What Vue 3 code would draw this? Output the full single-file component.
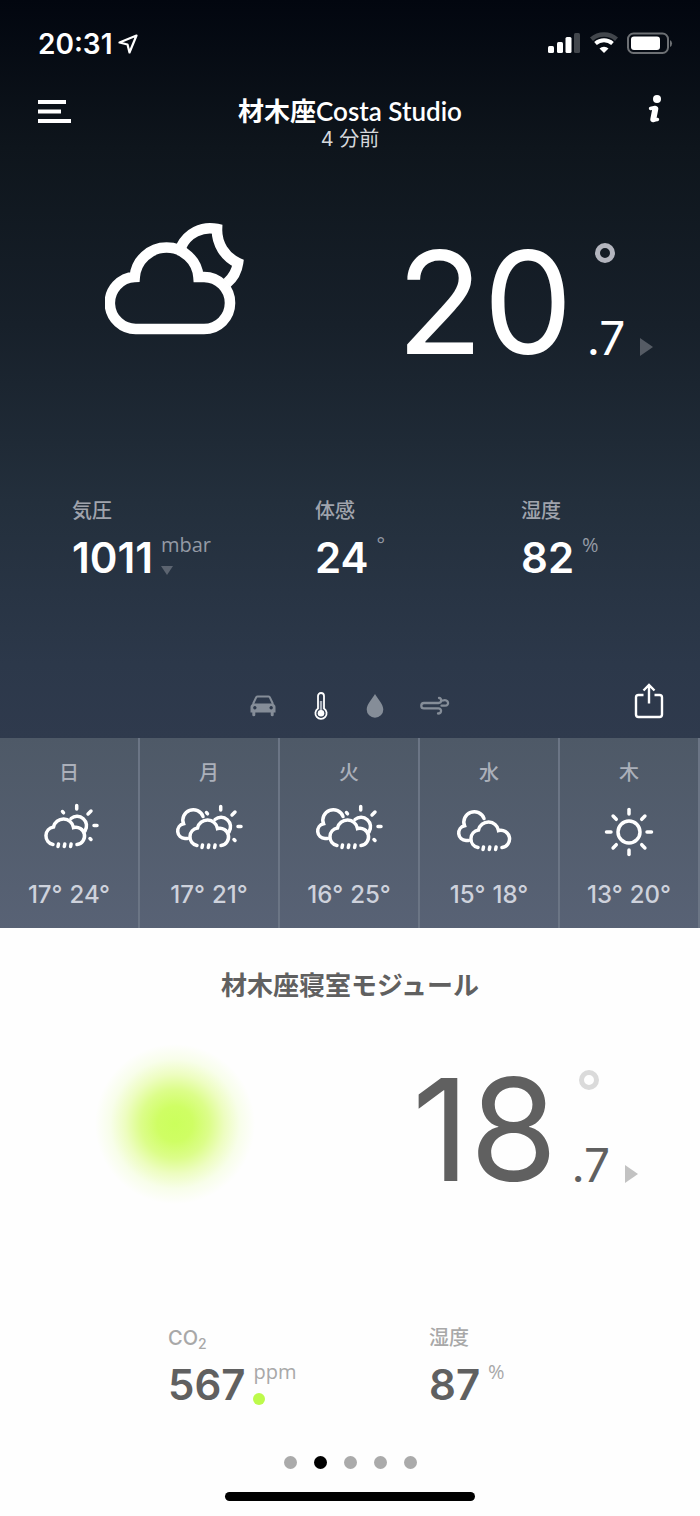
<script setup>
const outdoor = [
  { label: '気圧', value: '1011', unit: 'mbar', mark: 'down' },
  { label: '体感', value: '24', unit: '°', mark: '' },
  { label: '湿度', value: '82', unit: '%', mark: '' },
]

const forecast = [
  { day: '日', low: 17, high: 24, icon: 'sun-rain' },
  { day: '月', low: 17, high: 21, icon: 'sun-clouds-rain' },
  { day: '火', low: 16, high: 25, icon: 'sun-clouds-rain' },
  { day: '水', low: 15, high: 18, icon: 'clouds-rain' },
  { day: '木', low: 13, high: 20, icon: 'sun' },
]

const pages = 5
const activePage = 2

const frontShift = { 'sun-rain': '10 0', 'sun-clouds-rain': '14 1', 'clouds-rain': '15 3' }
const rays = [0, 45, 90, 135, 180, 225, 270, 315]
</script>

<template>
  <main class="app">
    <section class="hero">
      <div class="status">
        <div class="clock">
          <span>20:31</span>
          <svg width="20" height="20" viewBox="0 0 20 20" aria-hidden="true">
            <path d="M18.500 1.500 L1.500 8.500 L9.500 10.500 L11.500 18.500 Z" fill="none" stroke="#fff" stroke-width="2.200" stroke-linejoin="round" />
          </svg>
        </div>
        <svg width="126" height="24" viewBox="0 0 126 24" aria-hidden="true">
          <g fill="#fff">
            <rect x="1" y="14" width="6" height="7" rx="1.5" />
            <rect x="10" y="10" width="6" height="11" rx="1.5" />
            <rect x="18.500" y="5" width="6" height="16" rx="1.5" />
            <rect x="27" y="1" width="6" height="20" rx="1.5" fill="#42464c" />
          </g>
          <path d="M44.500 7.200 A19 19 0 0 1 69.500 7.200" fill="none" stroke="#42464c" stroke-width="4.600" />
          <path d="M48.500 11.500 A13 13 0 0 1 65.500 11.500" fill="none" stroke="#fff" stroke-width="4" />
          <path d="M57 21 L52.500 16.500 A6.500 6.500 0 0 1 61.500 16.500 Z" fill="#fff" />
          <rect x="81" y="1.500" width="40" height="19.500" rx="5.500" fill="none" stroke="#6d7074" stroke-width="2" />
          <rect x="84" y="4.500" width="29" height="13.500" rx="3" fill="#fff" />
          <path d="M123 8 a4 4 0 0 1 0 7 z" fill="#6d7074" />
        </svg>
      </div>

      <header class="header">
        <button class="icon-button" type="button" aria-label="メニュー">
          <svg width="33" height="24" viewBox="0 0 33 24">
            <path d="M0 2 H28 M0 11.500 H23 M0 21 H33" stroke="#fff" stroke-width="4" />
          </svg>
        </button>
        <div class="title">
          <h1>材木座Costa Studio</h1>
          <p>4 分前</p>
        </div>
        <button class="icon-button end" type="button" aria-label="情報">
          <svg width="14" height="28" viewBox="0 0 14 28">
            <circle cx="9" cy="4" r="4" fill="#fff" />
            <path d="M2.500 13.500 L7 12.500 L5 25 L9.500 24.500" fill="none" stroke="#fff" stroke-width="3.400" stroke-linecap="round" stroke-linejoin="round" />
            <path d="M7.300 14 L5.300 24.300" stroke="#fff" stroke-width="6" stroke-linecap="round" />
          </svg>
        </button>
      </header>

      <div class="reading">
        <svg class="sky" width="140" height="114" viewBox="0 0 140 114" role="img" aria-label="曇り、夜">
          <g fill="none" stroke="#fff" stroke-width="10.600">
            <path d="M32 107 H99 A26 26 0 0 0 99 55 H93.500 A32 32 0 0 0 29.700 55 A26 26 0 0 0 32 107 Z" />
            <path d="M76 25 A32 32 0 0 1 112 7 A36 36 0 0 0 133 41 A32 32 0 0 1 122 61" />
          </g>
        </svg>
        <div class="temp">
          <span class="whole">20</span>
          <span class="side">
            <i class="ring"></i>
            <span class="decimal">.7<i class="trend"></i></span>
          </span>
        </div>
      </div>

      <dl class="metrics outdoor">
        <div v-for="m in outdoor" :key="m.label">
          <dt>{{ m.label }}</dt>
          <dd>
            <span class="value">{{ m.value }}</span>
            <span class="unit">{{ m.unit }}<i v-if="m.mark" class="falling"></i></span>
          </dd>
        </div>
      </dl>

      <nav class="tools">
        <div class="modes">
          <button class="icon-button" type="button" aria-label="交通">
            <svg width="26" height="22" viewBox="0 0 26 22">
              <path d="M3 9 L6.200 2.300 Q6.700 1.500 7.700 1.500 H18.300 Q19.300 1.500 19.800 2.300 L23 9" fill="none" stroke="#858d98" stroke-width="2" />
              <path fill-rule="evenodd" d="M3.500 8.500 H22.500 Q25.500 9.500 25.500 12 V17.500 H23.700 V20 Q23.700 21.300 22.300 21.300 Q20.700 21.300 20.700 20 V17.500 H5.300 V20 Q5.300 21.300 3.700 21.300 Q2.300 21.300 2.300 20 V17.500 H0.500 V12 Q0.500 9.500 3.500 8.500 Z M4.800 11 a1.700 1.700 0 1 0 0.100 0 Z M21.100 11 a1.700 1.700 0 1 0 0.100 0 Z" fill="#858d98" />
            </svg>
          </button>
          <button class="icon-button" type="button" aria-label="気温" aria-pressed="true">
            <svg width="16" height="28" viewBox="0 0 16 28">
              <path d="M6 16.500 V4 A3 3 0 0 1 12 4 V16.500 A5.600 5.600 0 1 1 6 16.500 Z" fill="none" stroke="#fff" stroke-width="1.800" />
              <path d="M9 9 V19" stroke="#a8afba" stroke-width="2.400" />
              <circle cx="9" cy="21.300" r="3.300" fill="#fff" />
            </svg>
          </button>
          <button class="icon-button" type="button" aria-label="雨量">
            <svg width="20" height="26" viewBox="0 0 20 26">
              <path d="M11 1 C13 5 19.300 11 19.300 16.500 A8.300 8.300 0 0 1 2.700 16.500 C2.700 11 9 5 11 1 Z" fill="#858d98" />
            </svg>
          </button>
          <button class="icon-button" type="button" aria-label="風">
            <svg width="30" height="20" viewBox="0 0 30 20">
              <path d="M19 2 C22 2 22 7 18.500 7 H4 A2.700 2.700 0 0 0 4 12.400 H18.500 C22 12.400 22 17.500 18 17.500 M23 4.500 C28.500 2.500 30 9.700 25 9.700 H21.500" fill="none" stroke="#858d98" stroke-width="2.300" stroke-linecap="round" />
            </svg>
          </button>
        </div>
        <button class="icon-button end" type="button" aria-label="共有">
          <svg width="30" height="36" viewBox="0 0 30 36">
            <path d="M9.500 12 H4.500 Q2 12 2 14.500 V31.500 Q2 34 4.500 34 H25.500 Q28 34 28 31.500 V14.500 Q28 12 25.500 12 H20.500 M15 20.500 V2.500 M9.500 7.500 L15 2 L20.500 7.500" fill="none" stroke="#fff" stroke-width="2.400" />
          </svg>
        </button>
      </nav>
    </section>

    <ul class="forecast">
      <li v-for="f in forecast" :key="f.day">
        <span class="day">{{ f.day }}</span>
        <svg width="80" height="60" viewBox="0 0 80 60" aria-hidden="true">
          <g fill="none" stroke="#fff" stroke-width="3.500" stroke-linecap="round">
            <template v-if="f.icon === 'sun'">
              <circle cx="40" cy="32" r="11" />
              <path v-for="r in rays" :key="r" d="M40 9.500 V14" :transform="`rotate(${r} 40 32)`" />
            </template>
            <g v-else :transform="`translate(${frontShift[f.icon]})`">
              <path d="M14 44.500 A8.900 8.900 0 0 1 14.500 27 A10.200 10.200 0 0 1 34.500 27.500 A8.700 8.700 0 1 1 38 44.500" />
              <path d="M19.500 44 L19 46.500 M25.800 44 L25.300 46.500 M32.100 44 L31.600 46.500" />
              <path v-if="f.icon !== 'clouds-rain'" d="M32 18.500 A9.500 9.500 0 0 1 46 31 M37.700 5.500 V9 M49 14 L52 11 M55 25.500 H58 M51 38.500 L52 39.500 M23.500 11.500 L24.500 12.800" />
              <path v-if="f.icon !== 'sun-rain'" d="M4.500 37.500 H2 A7.500 7.500 0 0 1 0.500 22.700 A10.300 10.300 0 0 1 20 15.500" />
            </g>
          </g>
        </svg>
        <span class="range"><span>{{ f.low }}°</span><span>{{ f.high }}°</span></span>
      </li>
    </ul>

    <section class="module">
      <h2>材木座寝室モジュール</h2>
      <div class="reading">
        <div class="glow"></div>
        <div class="temp">
          <span class="whole">18</span>
          <span class="side">
            <i class="ring"></i>
            <span class="decimal">.7<i class="trend"></i></span>
          </span>
        </div>
      </div>
      <dl class="metrics indoor">
        <div>
          <dt>CO<small>2</small></dt>
          <dd>
            <span class="value">567</span>
            <span class="unit">ppm<i class="good"></i></span>
          </dd>
        </div>
        <div>
          <dt>湿度</dt>
          <dd>
            <span class="value">87</span>
            <span class="unit">%</span>
          </dd>
        </div>
      </dl>
      <div class="pager">
        <button v-for="p in pages" :key="p" type="button" :class="{ on: p === activePage }" :aria-label="`ページ ${p}`"></button>
      </div>
      <div class="home"></div>
    </section>
  </main>
</template>

<style>
body {
  margin: 0;
  background: #fefefe;
}
</style>

<style scoped>
.app {
  font-family: Inter, 'Noto Sans CJK JP', sans-serif;
  color: #fff;
}
.app * {
  box-sizing: border-box;
}
h1, h2, p, dl, dd, ul {
  margin: 0;
  padding: 0;
}
.hero {
  background: linear-gradient(#02060f 0, #0e151c 20%, #17202a 44%, #232f3c 68%, #2c384a 90%, #2f3a4d 100%);
}
.icon-button {
  display: flex;
  padding: 0;
  border: 0;
  background: none;
}
.icon-button.end {
  justify-self: end;
}
.status {
  display: flex;
  justify-content: space-between;
  align-items: center;
  padding: 28px 27px 0 38px;
}
.clock {
  display: flex;
  align-items: center;
  gap: 5px;
  font-size: 28px;
  line-height: 32px;
  font-weight: 600;
}
.header {
  display: grid;
  grid-template-columns: 1fr auto 1fr;
  align-items: start;
  padding: 35px 38px 0;
}
.header .icon-button {
  padding-top: 5px;
}
.header .icon-button.end {
  padding-top: 0;
}
.title {
  text-align: center;
}
h1 {
  font-family: Lato, 'Noto Sans CJK JP', sans-serif;
  font-size: 26px;
  line-height: 32px;
  font-weight: 600;
}
.title p {
  font-size: 20px;
  line-height: 24px;
  font-weight: 400;
  color: #d5d8db;
}
.reading {
  display: grid;
  grid-template-columns: 1fr 1fr;
  justify-items: center;
  align-items: center;
}
.hero .reading {
  padding-top: 71px;
}
.sky {
  margin-bottom: 46px;
}
.temp {
  display: flex;
  align-items: center;
  gap: 14px;
}
.whole {
  font-size: 142px;
  line-height: 160px;
}
.side {
  display: flex;
  flex-direction: column;
  justify-content: space-between;
  height: 118px;
}
.ring {
  width: 20px;
  height: 20px;
  margin-left: 8px;
  border: 5px solid #b3b5be;
  border-radius: 50%;
}
.decimal {
  display: flex;
  align-items: center;
  gap: 15px;
  font-size: 46px;
  line-height: 46px;
}
.trend {
  margin-top: 18px;
  border-left: 13px solid #555b64;
  border-top: 9px solid transparent;
  border-bottom: 9px solid transparent;
}
.metrics {
  display: grid;
}
.outdoor {
  grid-template-columns: 243fr 206fr 179fr;
  padding: 115px 0 0 72px;
}
dt {
  font-size: 20px;
  line-height: 28px;
  font-weight: 500;
  color: #a0a4ad;
}
dd {
  display: flex;
  gap: 8px;
  margin-top: 7px;
}
.value {
  font-size: 42px;
  line-height: 52px;
  font-weight: 600;
}
.unit {
  display: flex;
  flex-direction: column;
  gap: 8px;
  font-family: 'Open Sans', 'Noto Sans CJK JP', sans-serif;
  font-size: 20px;
  line-height: 26px;
  color: #949aa5;
}
.falling {
  width: 12px;
  border-top: 9px solid #5c6470;
  border-left: 6px solid transparent;
  border-right: 6px solid transparent;
}
.tools {
  display: grid;
  grid-template-columns: 1fr auto 1fr;
  align-items: center;
  padding: 98px 36px 18px;
}
.modes {
  grid-column: 2;
  display: flex;
  align-items: center;
  gap: 36px;
  padding-top: 10px;
}
.forecast {
  display: grid;
  grid-template-columns: repeat(5, 1fr);
  list-style: none;
  background: linear-gradient(#4e5967, #586275);
}
.forecast li {
  display: flex;
  flex-direction: column;
  align-items: center;
  padding: 20px 0 17px;
  border-right: 2px solid #6b7585;
}
.day {
  margin-bottom: 12px;
  font-size: 20px;
  line-height: 30px;
  font-weight: 500;
  color: #abb0ba;
}
.range {
  display: flex;
  gap: 7px;
  margin-top: 19px;
  font-size: 24px;
  line-height: 32px;
  font-weight: 500;
  color: #ced2dc;
}
.module {
  color: #606060;
}
h2 {
  padding-top: 41px;
  text-align: center;
  font-size: 26px;
  line-height: 34px;
  font-weight: 600;
}
.module .reading {
  padding-top: 41px;
}
.glow {
  width: 160px;
  height: 160px;
  margin-bottom: 10px;
  border-radius: 50%;
  background: radial-gradient(closest-side, #cbff5c 0, #cffe64 22%, #dcfd8a 43%, #edfdc0 62%, #f8feea 81%, #fefefe 100%);
}
.module .ring {
  border-color: #dadada;
}
.module .trend {
  border-left-color: #c2c2c2;
}
.indoor {
  grid-template-columns: 261fr 271fr;
  padding: 110px 0 0 168px;
}
.indoor dt {
  color: #a8a8a8;
}
dt small {
  font-size: 14px;
  vertical-align: -4px;
  line-height: 14px;
}
.indoor .unit {
  color: #a8a8a8;
}
.good {
  width: 12px;
  height: 12px;
  border-radius: 50%;
  background: #bdfa4b;
}
.pager {
  display: flex;
  justify-content: center;
  gap: 17px;
  margin-top: 45px;
}
.pager button {
  width: 13px;
  height: 13px;
  padding: 0;
  border: 0;
  border-radius: 50%;
  background: #aaa;
}
.pager .on {
  background: #000;
}
.home {
  width: 250px;
  height: 9px;
  margin: 23px auto 15px;
  border-radius: 5px;
  background: #000;
}
</style>
